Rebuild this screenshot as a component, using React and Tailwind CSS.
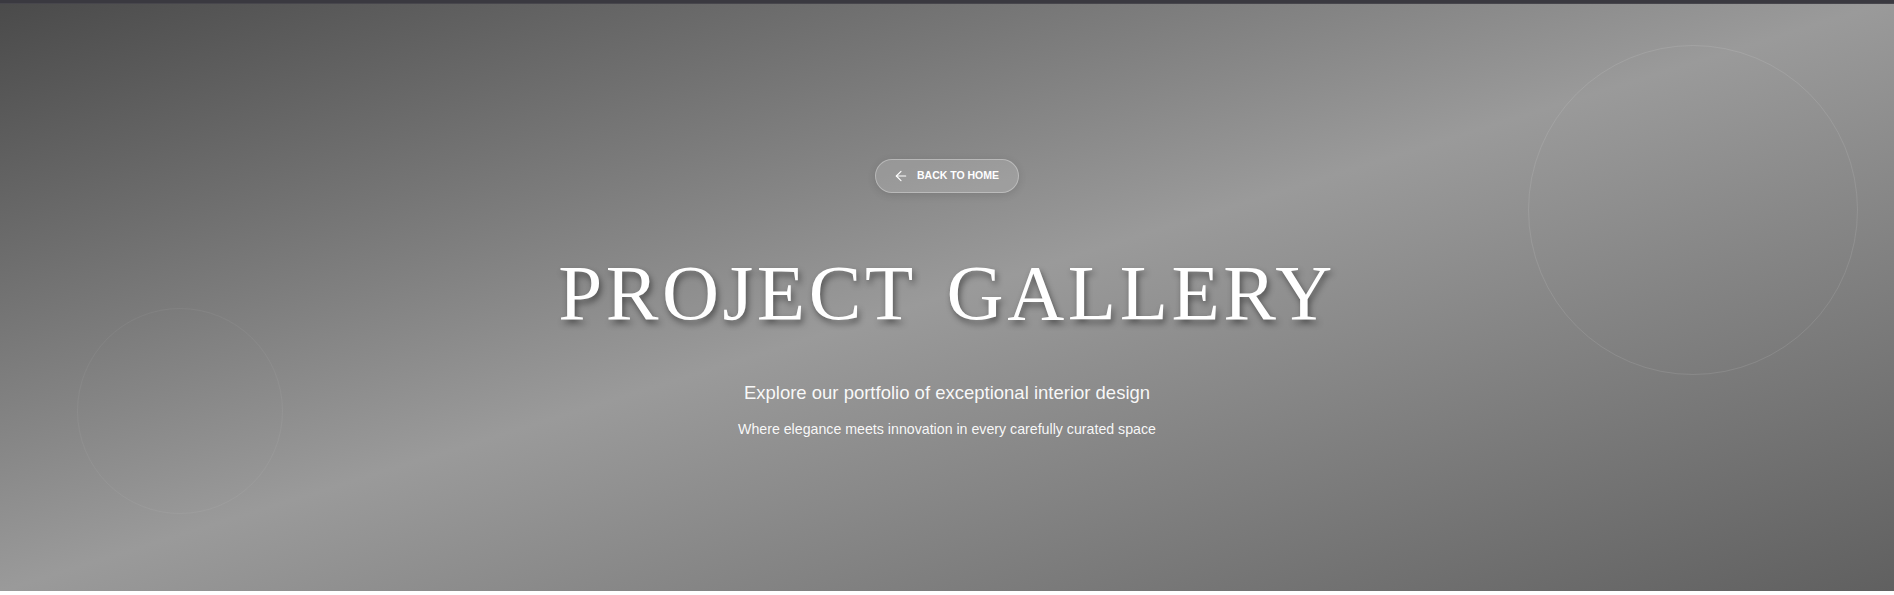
import { ArrowLeft } from 'lucide-react'

function GalleryHero() {
  return (
    <section className="relative h-[591px] w-full overflow-hidden bg-[linear-gradient(to_bottom_right,#4a4a4a,#9a9a9a_50%,#606060)]">
      <div className="h-[4px] w-full border-b border-[#47464c] bg-[#3a3940]" />

      <div className="pointer-events-none absolute left-[1528px] top-[45px] h-[330px] w-[330px] rounded-full border border-white/10" />
      <div className="pointer-events-none absolute left-[77px] top-[308px] h-[206px] w-[206px] rounded-full border border-white/[0.05]" />

      <div className="relative flex flex-col items-center pt-[155px] text-white">
        <button
          type="button"
          className="flex h-[34px] items-center gap-[8px] rounded-full border border-white/30 bg-white/15 pl-[17px] pr-[19px] font-['Liberation_Sans',Arial,sans-serif] text-[10.5px] font-bold uppercase text-white shadow-[0_2px_8px_rgba(0,0,0,0.12)]"
        >
          <ArrowLeft size={16} strokeWidth={1.75} />
          Back to Home
        </button>

        <h1 className="mt-[57px] font-['Liberation_Serif',serif] text-[79px] font-normal uppercase leading-[1.1] tracking-[0.045em] [word-spacing:8px] [text-shadow:2px_4px_6px_rgba(0,0,0,0.45)]">
          Project Gallery
        </h1>

        <p className="mt-[44px] font-['Liberation_Sans',Arial,sans-serif] text-[18.5px] leading-[24px] text-white/95">
          Explore our portfolio of exceptional interior design
        </p>
        <p className="mt-[14px] font-['Liberation_Sans',Arial,sans-serif] text-[14.2px] leading-[20px] text-white/95">
          Where elegance meets innovation in every carefully curated space
        </p>
      </div>
    </section>
  )
}

export default function App() {
  return (
    <div className="min-h-[595px] bg-white">
      <GalleryHero />
    </div>
  )
}
